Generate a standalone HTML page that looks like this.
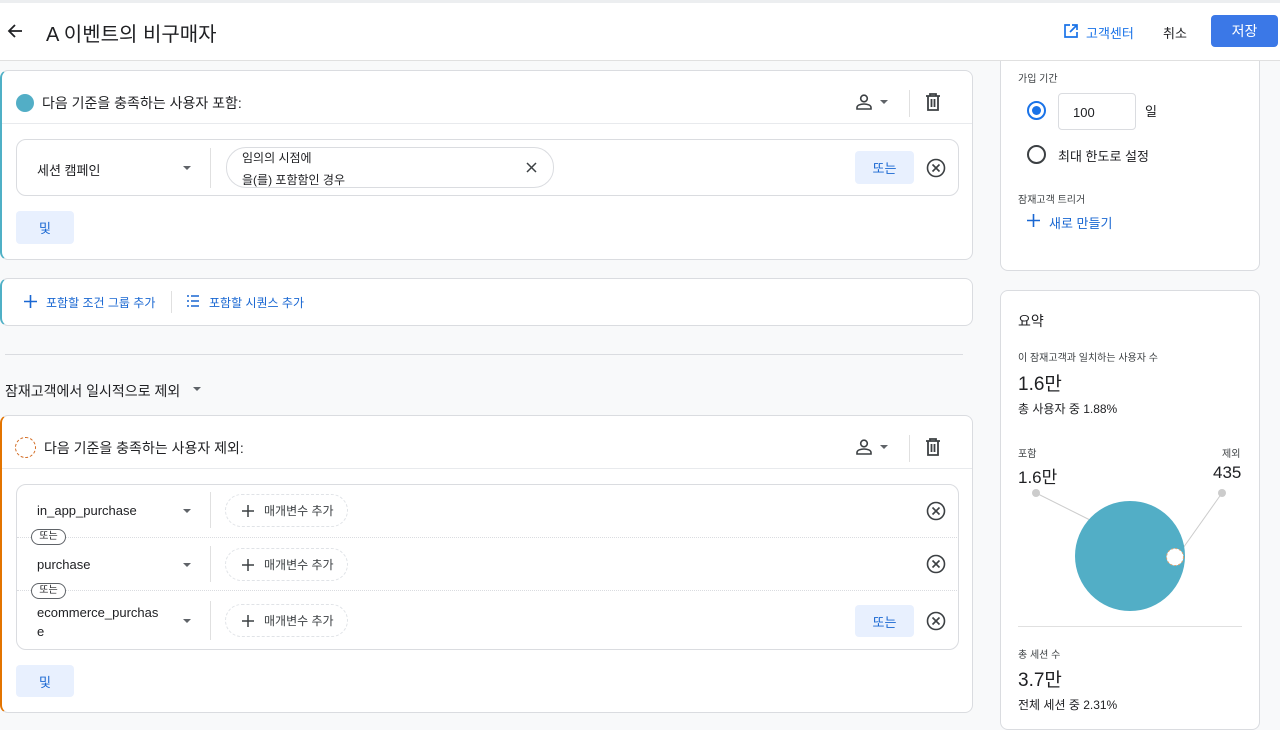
<!DOCTYPE html>
<html><head><meta charset="utf-8"><style>
*{box-sizing:border-box;margin:0;padding:0}
body{width:1280px;height:721px;overflow:hidden;background:#f8f9fa;font-family:"Liberation Sans","Noto Sans CJK KR",sans-serif;color:#202124;position:relative}
.a{position:absolute}
.card{position:absolute;background:#fff;border:1px solid #dadce0;border-radius:8px}
.t13{font-size:13px}
.blue{color:#1a73e8}
.btnl{position:absolute;background:#e8f0fe;color:#1967d2;border-radius:4px;font-size:13px;display:flex;align-items:center;justify-content:center}
.chip{position:absolute;border:1px dashed #e0e3e7;border-radius:18px;font-size:12px;color:#3c4043;display:flex;align-items:center;padding-left:16px}
.chip svg{margin-right:10px}
.tri{position:absolute;width:0;height:0;border-left:4px solid transparent;border-right:4px solid transparent;border-top:4px solid #5f6368}
.orc{position:absolute;border:1px solid #5f6368;border-radius:9px;font-size:10px;background:#fff;width:35px;height:16px;text-align:center;line-height:14px}
.hdr{z-index:5}
</style></head><body>

<!-- right card 1 -->
<div class="card" style="left:1000px;top:30px;width:260px;height:241px;border-radius:0 0 8px 8px"></div>
<div class="a" style="left:1018px;top:70px;font-size:10px;color:#3c4043">가입 기간</div>
<div class="a" style="left:1027px;top:101px;width:19px;height:19px;border-radius:50%;border:2px solid #1a73e8"></div>
<div class="a" style="left:1032px;top:106px;width:9px;height:9px;border-radius:50%;background:#1a73e8"></div>
<div class="a" style="left:1058px;top:93px;width:78px;height:37px;border:1px solid #dadce0;border-radius:4px;font-size:13px;padding:11px 0 0 14px">100</div>
<div class="a t13" style="left:1145px;top:101px">일</div>
<div class="a" style="left:1027px;top:145px;width:19px;height:19px;border-radius:50%;border:2px solid #3c4043"></div>
<div class="a t13" style="left:1058px;top:146px">최대 한도로 설정</div>
<div class="a" style="left:1018px;top:191px;font-size:10px;color:#3c4043">잠재고객 트리거</div>
<svg class="a" style="left:1027px;top:214px" width="13" height="13" viewBox="0 0 13 13"><path d="M6.5 0v13M0 6.5h13" stroke="#1967d2" stroke-width="1.6"/></svg>
<div class="a t13" style="left:1049px;top:213px;color:#1967d2">새로 만들기</div>

<div class="a hdr" style="left:0;top:0;width:1280px;height:61px;background:#fff;border-top:3px solid #eceef0;border-bottom:1px solid #e0e0e0"></div>
<svg class="a hdr" style="left:6px;top:22px" width="18" height="18" viewBox="0 0 18 18"><path d="M16 9H3M9 3L3 9l6 6" stroke="#202124" stroke-width="1.8" fill="none"/></svg>
<div class="a hdr" style="left:46px;top:18px;font-size:20px">A 이벤트의 비구매자</div>
<svg class="a hdr" style="left:1063px;top:23px" width="16" height="16" viewBox="0 0 16 16"><path d="M7 2H2v12h12V9M9 2h5v5M14 2L7 9" stroke="#1a73e8" stroke-width="1.7" fill="none"/></svg>
<div class="a blue t13 hdr" style="left:1086px;top:23px">고객센터</div>
<div class="a t13 hdr" style="left:1163px;top:23px">취소</div>
<div class="a hdr" style="left:1211px;top:15px;width:67px;height:32px;background:#3b78e7;border-radius:4px;color:#fff;font-size:14px;text-align:center;line-height:32px">저장</div>

<!-- card1 -->
<div class="card" style="left:0;top:70px;width:973px;height:190px;border-left:2px solid #4fb0c6"></div>
<div class="a" style="left:16px;top:94px;width:18px;height:18px;border-radius:50%;background:#52aec6"></div>
<div class="a" style="left:42px;top:93px;font-size:14px">다음 기준을 충족하는 사용자 포함:</div>
<svg class="a" style="left:855px;top:94px" width="18" height="16" viewBox="0 0 18 16"><circle cx="9" cy="4.5" r="3.3" stroke="#3c4043" stroke-width="1.6" fill="none"/><path d="M2 15v-1.5C2 11 6 10 9 10s7 1 7 3.5V15z" stroke="#3c4043" stroke-width="1.6" fill="none"/></svg>
<div class="tri" style="left:880px;top:100px"></div>
<div class="a" style="left:909px;top:90px;width:1px;height:27px;background:#e0e0e0"></div>
<svg class="a" style="left:925px;top:93px" width="16" height="18" viewBox="0 0 16 18"><path d="M1 3h14M5 3V1h6v2M3 3v14h10V3M6.5 6v8M9.5 6v8" stroke="#3c4043" stroke-width="1.8" fill="none"/></svg>
<div class="a" style="left:2px;top:123px;width:970px;height:1px;background:#e8eaed"></div>
<div class="a" style="left:16px;top:139px;width:943px;height:57px;border:1px solid #dadce0;border-radius:10px"></div>
<div class="a t13" style="left:37px;top:160px">세션 캠페인</div>
<div class="tri" style="left:183px;top:166px"></div>
<div class="a" style="left:210px;top:148px;width:1px;height:40px;background:#e0e0e0"></div>
<div class="a" style="left:226px;top:147px;width:328px;height:41px;border:1px solid #dadce0;border-radius:20px"></div>
<div class="a" style="left:242px;top:149px;font-size:12px">임의의 시점에</div>
<div class="a" style="left:242px;top:171px;font-size:12px">을(를) 포함함인 경우</div>
<svg class="a" style="left:526px;top:162px" width="11" height="11" viewBox="0 0 11 11"><path d="M1 1l9 9M10 1l-9 9" stroke="#3c4043" stroke-width="1.5"/></svg>
<div class="btnl" style="left:855px;top:151px;width:59px;height:33px">또는</div>
<svg class="a" style="left:926px;top:158px" width="20" height="20" viewBox="0 0 20 20"><circle cx="10" cy="10" r="8.5" stroke="#3c4043" stroke-width="1.6" fill="none"/><path d="M6.5 6.5l7 7M13.5 6.5l-7 7" stroke="#3c4043" stroke-width="1.6"/></svg>
<div class="btnl" style="left:16px;top:211px;width:58px;height:33px">및</div>

<!-- card2 -->
<div class="card" style="left:0;top:278px;width:973px;height:48px;border-left:2px solid #4fb0c6"></div>
<svg class="a" style="left:24px;top:295px" width="13" height="13" viewBox="0 0 13 13"><path d="M6.5 0v13M0 6.5h13" stroke="#1967d2" stroke-width="1.6"/></svg>
<div class="a" style="left:46px;top:294px;font-size:12px;color:#1967d2">포함할 조건 그룹 추가</div>
<div class="a" style="left:171px;top:291px;width:1px;height:22px;background:#e0e0e0"></div>
<svg class="a" style="left:186px;top:295px" width="14" height="12" viewBox="0 0 14 12"><path d="M1 1h2M1 6h2M1 11h2M5 1h8M5 6h8M5 11h8" stroke="#1967d2" stroke-width="1.5"/></svg>
<div class="a" style="left:209px;top:294px;font-size:12px;color:#1967d2">포함할 시퀀스 추가</div>

<div class="a" style="left:5px;top:354px;width:958px;height:1px;background:#dadce0"></div>
<div class="a" style="left:5px;top:381px;font-size:14px">잠재고객에서 일시적으로 제외</div>
<div class="tri" style="left:193px;top:387px"></div>

<!-- card3 -->
<div class="card" style="left:0;top:415px;width:973px;height:298px;border-left:2px solid #e37400"></div>
<div class="a" style="left:15px;top:437px;width:21px;height:21px;border-radius:50%;border:1.5px dashed #d2691e"></div>
<div class="a" style="left:44px;top:438px;font-size:14px">다음 기준을 충족하는 사용자 제외:</div>
<svg class="a" style="left:855px;top:439px" width="18" height="16" viewBox="0 0 18 16"><circle cx="9" cy="4.5" r="3.3" stroke="#3c4043" stroke-width="1.6" fill="none"/><path d="M2 15v-1.5C2 11 6 10 9 10s7 1 7 3.5V15z" stroke="#3c4043" stroke-width="1.6" fill="none"/></svg>
<div class="tri" style="left:880px;top:445px"></div>
<div class="a" style="left:909px;top:435px;width:1px;height:27px;background:#e0e0e0"></div>
<svg class="a" style="left:925px;top:438px" width="16" height="18" viewBox="0 0 16 18"><path d="M1 3h14M5 3V1h6v2M3 3v14h10V3M6.5 6v8M9.5 6v8" stroke="#3c4043" stroke-width="1.8" fill="none"/></svg>
<div class="a" style="left:2px;top:468px;width:970px;height:1px;background:#e8eaed"></div>
<div class="a" style="left:16px;top:484px;width:943px;height:166px;border:1px solid #dadce0;border-radius:10px"></div>
<div class="a" style="left:17px;top:537px;width:940px;border-top:1px dotted #dadce0"></div>
<div class="a" style="left:17px;top:590px;width:940px;border-top:1px dotted #dadce0"></div>

<div class="a t13" style="left:37px;top:503px">in_app_purchase</div>
<div class="tri" style="left:183px;top:509px"></div>
<div class="a" style="left:210px;top:492px;width:1px;height:36px;background:#e0e0e0"></div>
<div class="chip" style="left:225px;top:494px;width:123px;height:33px"><svg width="12" height="12" viewBox="0 0 12 12"><path d="M6 0v12M0 6h12" stroke="#3c4043" stroke-width="1.5"/></svg>매개변수 추가</div>
<svg class="a" style="left:926px;top:501px" width="20" height="20" viewBox="0 0 20 20"><circle cx="10" cy="10" r="8.5" stroke="#3c4043" stroke-width="1.6" fill="none"/><path d="M6.5 6.5l7 7M13.5 6.5l-7 7" stroke="#3c4043" stroke-width="1.6"/></svg>
<div class="orc" style="left:31px;top:529px">또는</div>

<div class="a t13" style="left:37px;top:557px">purchase</div>
<div class="tri" style="left:183px;top:563px"></div>
<div class="a" style="left:210px;top:546px;width:1px;height:36px;background:#e0e0e0"></div>
<div class="chip" style="left:225px;top:548px;width:123px;height:33px"><svg width="12" height="12" viewBox="0 0 12 12"><path d="M6 0v12M0 6h12" stroke="#3c4043" stroke-width="1.5"/></svg>매개변수 추가</div>
<svg class="a" style="left:926px;top:554px" width="20" height="20" viewBox="0 0 20 20"><circle cx="10" cy="10" r="8.5" stroke="#3c4043" stroke-width="1.6" fill="none"/><path d="M6.5 6.5l7 7M13.5 6.5l-7 7" stroke="#3c4043" stroke-width="1.6"/></svg>
<div class="orc" style="left:31px;top:583px">또는</div>

<div class="a t13" style="left:37px;top:603px;line-height:19px;width:130px">ecommerce_purchas<br>e</div>
<div class="tri" style="left:183px;top:619px"></div>
<div class="a" style="left:210px;top:601px;width:1px;height:39px;background:#e0e0e0"></div>
<div class="chip" style="left:225px;top:604px;width:123px;height:33px"><svg width="12" height="12" viewBox="0 0 12 12"><path d="M6 0v12M0 6h12" stroke="#3c4043" stroke-width="1.5"/></svg>매개변수 추가</div>
<div class="btnl" style="left:855px;top:605px;width:59px;height:32px">또는</div>
<svg class="a" style="left:926px;top:611px" width="20" height="20" viewBox="0 0 20 20"><circle cx="10" cy="10" r="8.5" stroke="#3c4043" stroke-width="1.6" fill="none"/><path d="M6.5 6.5l7 7M13.5 6.5l-7 7" stroke="#3c4043" stroke-width="1.6"/></svg>
<div class="btnl" style="left:16px;top:665px;width:58px;height:32px">및</div>

<!-- right card 2 -->
<div class="card" style="left:1000px;top:290px;width:260px;height:440px"></div>
<div class="a" style="left:1018px;top:311px;font-size:14px">요약</div>
<div class="a" style="left:1018px;top:349px;font-size:10px;color:#3c4043">이 잠재고객과 일치하는 사용자 수</div>
<div class="a" style="left:1018px;top:369px;font-size:19px">1.6만</div>
<div class="a" style="left:1018px;top:400px;font-size:12px">총 사용자 중 1.88%</div>
<div class="a" style="left:1018px;top:445px;font-size:10px;color:#3c4043">포함</div>
<div class="a" style="left:1222px;top:445px;font-size:10px;color:#3c4043">제외</div>
<div class="a" style="left:1018px;top:463px;font-size:17px">1.6만</div>
<div class="a" style="left:1213px;top:463px;font-size:17px">435</div>
<svg class="a" style="left:1000px;top:480px" width="260" height="140" viewBox="0 0 260 140"><line x1="36" y1="13" x2="90" y2="40" stroke="#ccc"/><line x1="222" y1="13" x2="176" y2="78" stroke="#ccc"/><circle cx="36" cy="13" r="4" fill="#ccc"/><circle cx="222" cy="13" r="4" fill="#ccc"/><circle cx="130" cy="76" r="55" fill="#52aec6"/><circle cx="175" cy="77" r="8.5" fill="#fff" stroke="#e0a070" stroke-dasharray="2 2"/></svg>
<div class="a" style="left:1018px;top:626px;width:224px;height:1px;background:#e0e0e0"></div>
<div class="a" style="left:1018px;top:646px;font-size:10px;color:#3c4043">총 세션 수</div>
<div class="a" style="left:1018px;top:665px;font-size:19px">3.7만</div>
<div class="a" style="left:1018px;top:696px;font-size:12px">전체 세션 중 2.31%</div>
</body></html>
